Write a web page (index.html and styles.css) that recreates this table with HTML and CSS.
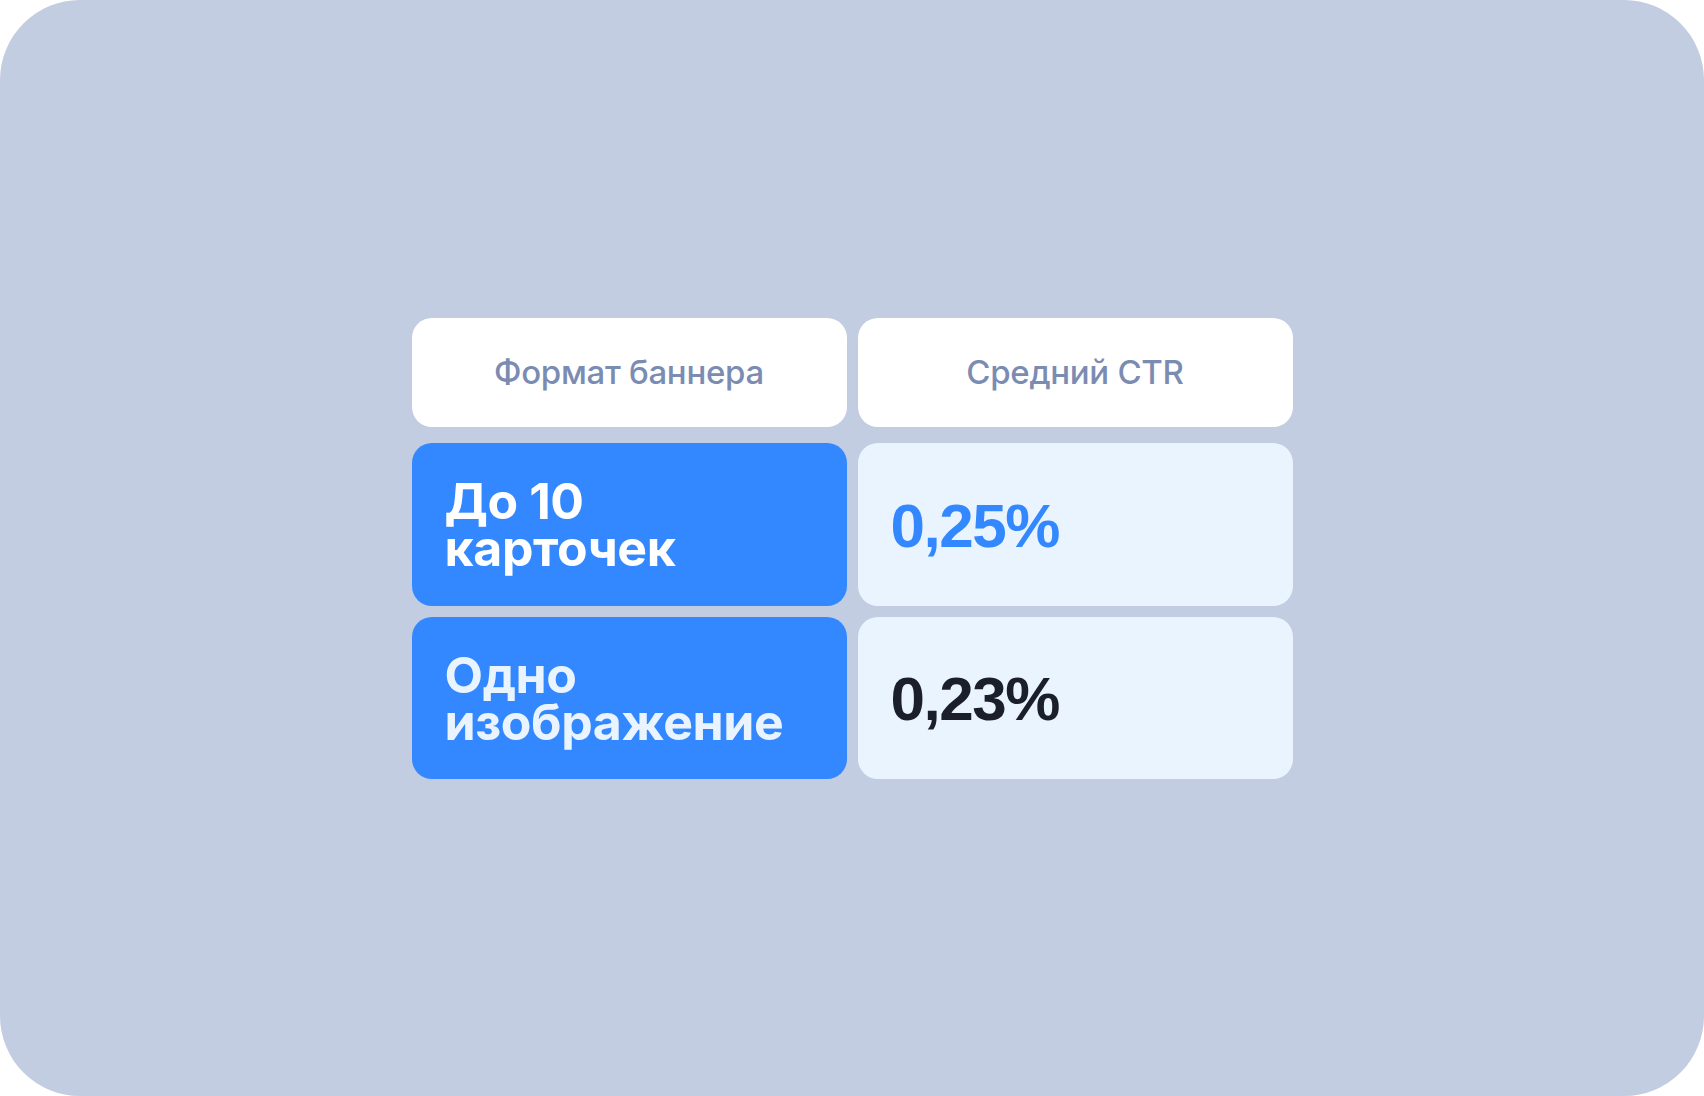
FILE: index.html
```html
<!DOCTYPE html>
<html lang="ru">
<head>
<meta charset="utf-8">
<link rel="stylesheet" href="styles.css">
</head>
<body>
<div class="frame">
  <div class="table">
    <div class="cell head">Формат баннера</div>
    <div class="cell head">Средний CTR</div>
    <div class="cell label">До 10<br>карточек</div>
    <div class="cell value accent">0,25%</div>
    <div class="cell label soft">Одно<br>изображение</div>
    <div class="cell value dark">0,23%</div>
  </div>
</div>
</body>
</html>
```

FILE: styles.css
```css
html, body {
  margin: 0;
  padding: 0;
  background: #ffffff;
}
.frame {
  width: 1704px;
  height: 1096px;
  background: #c3cde1;
  border-radius: 80px;
  display: flex;
  align-items: center;
  justify-content: center;
}
.table {
  display: grid;
  grid-template-columns: 435px 435px;
  grid-template-rows: 114px 163px 162px;
  column-gap: 11px;
  row-gap: 11px;
}
.cell {
  border-radius: 20px;
  display: flex;
  align-items: center;
  box-sizing: border-box;
}
.head {
  background: #ffffff;
  justify-content: center;
  height: 109px;
  align-self: start;
  font-family: Inter, "Noto Sans", sans-serif;
  font-weight: 500;
  font-size: 33px;
  color: #7b8cb3;
  letter-spacing: -0.3px;
}
.label {
  background: #3388ff;
  color: #ffffff;
  padding-left: 33px;
  padding-top: 2px;
  font-family: Inter, "Noto Sans", sans-serif;
  font-weight: 700;
  font-size: 50px;
  line-height: 47px;
  letter-spacing: -0.4px;
}
.label.soft {
  color: #eaf4ff;
}
.value {
  background: #eaf4ff;
  padding-left: 33px;
  padding-top: 2px;
  font-family: "Liberation Sans", Arial, sans-serif;
  font-weight: 700;
  font-size: 62px;
  letter-spacing: -1.5px;
}
.value.accent {
  color: #3388ff;
}
.value.dark {
  color: #1a1f2b;
}
```
